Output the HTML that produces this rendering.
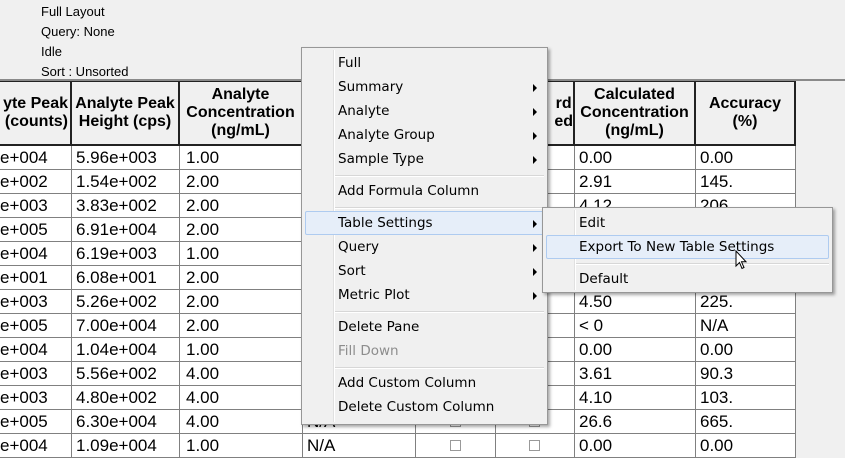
<!DOCTYPE html>
<html><head><style>
body{margin:0;width:845px;height:440px;background:#f0f0f0;overflow:hidden;position:relative;font-family:"Liberation Sans",Arial,sans-serif}
.info{position:absolute;left:41px;font-size:13px;color:#000}
.topline{position:absolute;left:0;top:79px;width:845px;height:2px;background:#8a8a8a}
.row{position:absolute;left:0;display:flex}
.c{box-sizing:border-box;flex:none;overflow:hidden;white-space:nowrap;position:relative}
.h .c{height:65px;background:#f0f0f0;border-right:2px solid #222;border-bottom:2px solid #222;border-top:1px solid #222;font-weight:bold;font-size:16px;line-height:18px;display:flex;align-items:center;justify-content:center;text-align:center}
.d .c{height:24px;background:#fff;border-right:1px solid #808080;border-bottom:1px solid #808080;font-size:17px;line-height:23px;padding-left:4px}
.menu{position:absolute;background:#f0f0f0;border:1px solid #979797;box-shadow:2px 2px 3px rgba(0,0,0,.35);font-family:"DejaVu Sans",sans-serif;font-size:13.5px}
.it{position:absolute;left:36px;height:24px;line-height:24px;color:#000;white-space:nowrap}
.ar{position:absolute;width:0;height:0;border-left:4px solid #000;border-top:4px solid transparent;border-bottom:4px solid transparent}
.sep{position:absolute;left:33px;right:3px;height:1px;background:#d7d7d7;border-bottom:1px solid #fff}
.hl{position:absolute;background:#e6eef9;border:1px solid #aecbf0;border-radius:2px}
.gut{position:absolute;top:2px;bottom:2px;width:1px;background:#e0e0e0;border-right:1px solid #fff}
.cb{position:absolute;top:6px;width:11px;height:11px;border:1px solid #999;background:#fff;box-sizing:border-box}
</style></head><body>
<div class="info" style="top:4px">Full Layout</div>
<div class="info" style="top:24px">Query: None</div>
<div class="info" style="top:44px">Idle</div>
<div class="info" style="top:64px">Sort : Unsorted</div>
<div class="topline"></div>

<div class="row h" style="top:81px">
<div class="c" style="width:72px;justify-content:flex-end;text-align:right;padding-right:2px">yte Peak<br>&nbsp;(counts)</div>
<div class="c" style="width:108px">Analyte Peak<br>Height (cps)</div>
<div class="c" style="width:123px">Analyte<br>Concentration<br>(ng/mL)</div>
<div class="c" style="width:113px"></div>
<div class="c" style="width:80px"></div>
<div class="c" style="width:79px;justify-content:flex-end">rd<br>ed</div>
<div class="c" style="width:121px">Calculated<br>Concentration<br>(ng/mL)</div>
<div class="c" style="width:100px">Accuracy<br>(%)</div>
</div>

<div id="rows"></div>
<script>
var d=[["e+004","5.96e+003","1.00","","0.00","0.00"],["e+002","1.54e+002","2.00","","2.91","145."],["e+003","3.83e+002","2.00","","4.12","206."],["e+005","6.91e+004","2.00","","",""],["e+004","6.19e+003","1.00","","",""],["e+001","6.08e+001","2.00","","",""],["e+003","5.26e+002","2.00","","4.50","225."],["e+005","7.00e+004","2.00","","&lt; 0","N/A"],["e+004","1.04e+004","1.00","","0.00","0.00"],["e+003","5.56e+002","4.00","","3.61","90.3"],["e+003","4.80e+002","4.00","","4.10","103."],["e+005","6.30e+004","4.00","N/A","26.6","665."],["e+004","1.09e+004","1.00","N/A","0.00","0.00"]];
var w=[72,108,123,113,80,79,121,100],h="";
d.forEach(function(r,i){
 var cells=[r[0],r[1],r[2],r[3],"","",r[4],r[5]];
 h+='<div class="row d" style="top:'+(146+i*24)+'px">';
 cells.forEach(function(t,j){
  var st='width:'+w[j]+'px;'+(j==0?'padding-left:0;':'')+(j==2?'padding-left:6px;':'');
  var extra='';
  if(i>=11&&(j==4))extra='<div class="cb" style="left:34px"></div>';
  if(i>=11&&(j==5))extra='<div class="cb" style="left:33px"></div>';
  h+='<div class="c" style="'+st+'">'+t+extra+'</div>';
 });
 h+='</div>';
});
document.getElementById("rows").innerHTML=h;
</script>

<div class="menu" style="left:301px;top:47px;width:245px;height:376px">
<div class="gut" style="left:31px"></div>
<div class="it" style="top:3px">Full</div>
<div class="it" style="top:27px">Summary</div><div class="ar" style="left:231px;top:36px"></div>
<div class="it" style="top:51px">Analyte</div><div class="ar" style="left:231px;top:60px"></div>
<div class="it" style="top:75px">Analyte Group</div><div class="ar" style="left:231px;top:84px"></div>
<div class="it" style="top:99px">Sample Type</div><div class="ar" style="left:231px;top:108px"></div>
<div class="sep" style="top:127px"></div>
<div class="it" style="top:131px">Add Formula Column</div>
<div class="sep" style="top:159px"></div>
<div class="hl" style="left:3px;top:163px;width:237px;height:22px"></div>
<div class="it" style="top:163px">Table Settings</div><div class="ar" style="left:231px;top:172px"></div>
<div class="it" style="top:187px">Query</div><div class="ar" style="left:231px;top:196px"></div>
<div class="it" style="top:211px">Sort</div><div class="ar" style="left:231px;top:220px"></div>
<div class="it" style="top:235px">Metric Plot</div><div class="ar" style="left:231px;top:244px"></div>
<div class="sep" style="top:263px"></div>
<div class="it" style="top:267px">Delete Pane</div>
<div class="it" style="top:291px;color:#8d8d8d">Fill Down</div>
<div class="sep" style="top:319px"></div>
<div class="it" style="top:323px">Add Custom Column</div>
<div class="it" style="top:347px">Delete Custom Column</div>
</div>

<div class="menu" style="left:542px;top:207px;width:289px;height:84px">
<div class="gut" style="left:31px"></div>
<div class="it" style="top:3px">Edit</div>
<div class="hl" style="left:3px;top:27px;width:281px;height:22px"></div>
<div class="it" style="top:27px">Export To New Table Settings</div>
<div class="sep" style="top:55px"></div>
<div class="it" style="top:59px">Default</div>
</div>
<svg style="position:absolute;left:735px;top:250px" width="14" height="22" viewBox="0 0 14 22"><path d="M1 1 L1 16 L4.5 12.5 L7 18.5 L9 17.5 L6.5 11.8 L11 11.8 Z" fill="#fff" stroke="#000" stroke-width="1"/></svg>
</body></html>
